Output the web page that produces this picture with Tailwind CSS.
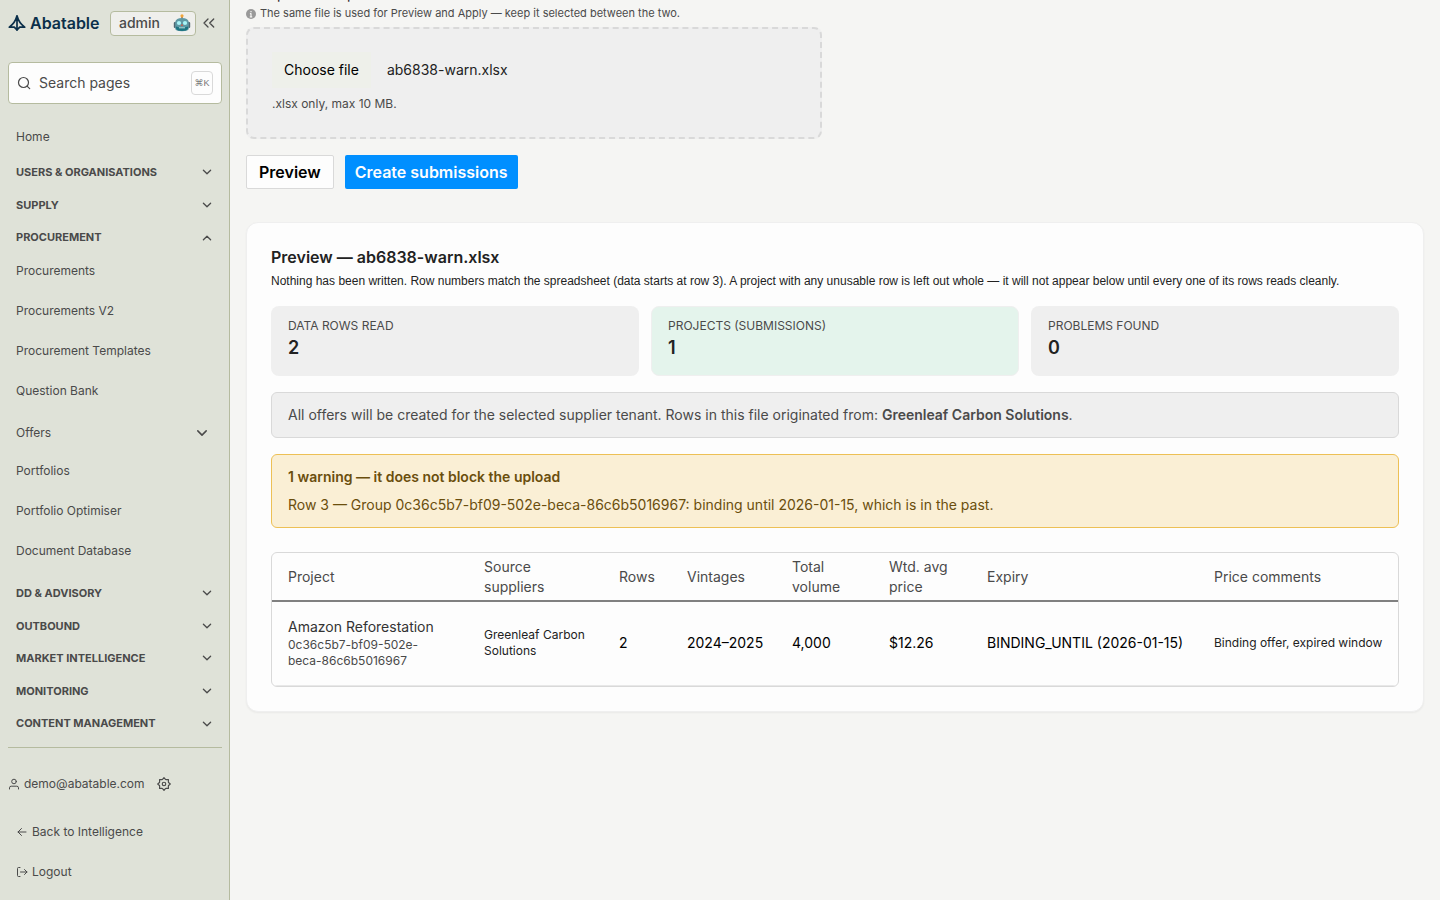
<!DOCTYPE html>
<html lang="en">
<head>
  <meta charset="UTF-8" />
  <meta name="viewport" content="width=device-width, initial-scale=1.0" />
  <title>Abatable admin - Upload submissions</title>
  <script src="https://cdn.jsdelivr.net/npm/@tailwindcss/browser@4"></script>
</head>
<body class="bg-[#f5f5f3] font-[Inter,'Liberation_Sans',Arial,sans-serif] text-[#222]">
  <!-- Shared icons -->
  <svg class="hidden" aria-hidden="true">
    <symbol id="chevron" viewBox="0 0 12 12" fill="none" stroke="currentColor" stroke-width="1.300" stroke-linecap="round" stroke-linejoin="round">
      <path d="M2.400 4.200 6 7.800l3.600-3.600" />
    </symbol>
  </svg>

  <div class="flex h-screen overflow-hidden">
    <!-- Sidebar -->
    <aside class="flex w-[230px] shrink-0 flex-col border-r border-[#b5bb9f] bg-[#dfe2d8] pr-[7px] pl-2 text-xs text-[#4a4a4a]">
      <div class="flex h-[46px] items-center">
        <a href="#" class="flex w-[90px] items-center gap-1 text-base font-semibold text-[#0b2f4a]">
          <svg class="h-[18px] w-[18px] shrink-0" viewBox="0 0 18 18" fill="none" stroke="currentColor" stroke-width="1.700" stroke-linejoin="round" stroke-linecap="round" aria-hidden="true">
            <path d="M9 1.800v14.400M9 1.800C7.800 6.500 5 10.500 1.300 13.200h5L9 16l2.700-2.800h5C13 10.500 10.200 6.500 9 1.800" />
          </svg>
          Abatable
        </a>
        <a href="#" class="ml-3 flex h-[25px] w-[86px] items-center justify-between rounded border border-[#b5bb9f] bg-[#efefec] px-2 text-sm font-medium">
          admin
          <svg class="-mr-1 h-[18px] w-[18px]" viewBox="0 0 18 18" aria-hidden="true">
            <path d="M9 2v3" stroke="#8b6a55" stroke-width="1.500" />
            <circle cx="9" cy="1.800" r="1.600" fill="#f0a53a" />
            <rect x="0.800" y="8" width="3" height="6" rx="1" fill="#4e6672" />
            <rect x="14.200" y="8" width="3" height="6" rx="1" fill="#4e6672" />
            <path d="M2.200 8Q3 4 9 4T15.800 8v6.500q0 2.800-6.800 2.800T2.200 14.500z" fill="#5f98a4" />
            <path d="M3 12.500q6 2 12 0v2q-1 2.500-6 2.500t-6-2.500z" fill="#1c7482" />
            <circle cx="6" cy="9" r="2.100" fill="#a9f3f7" /><circle cx="12" cy="9" r="2.100" fill="#a9f3f7" />
            <path d="M9 9.800l1.200 2H7.800z" fill="#e0503c" />
            <path d="M6 13.800h6" stroke="#b5dcdc" stroke-width="1" />
          </svg>
        </a>
        <button type="button" class="ml-[6px]" aria-label="Collapse sidebar">
          <svg class="h-[14px] w-[14px]" viewBox="0 0 14 14" fill="none" stroke="currentColor" stroke-width="1.300" stroke-linecap="round" stroke-linejoin="round" aria-hidden="true">
            <path d="M6 3 2 7l4 4M11.700 3l-4 4 4 4" />
          </svg>
        </button>
      </div>

      <label class="mt-4 flex h-[42px] shrink-0 items-center rounded border border-[#b5bb9f] bg-[#fdfdfd] px-2">
        <svg class="h-[14px] w-[14px] shrink-0" viewBox="0 0 14 14" fill="none" stroke="currentColor" stroke-width="1.200" stroke-linecap="round" aria-hidden="true">
          <circle cx="6.500" cy="6.500" r="5" /><path d="m10.300 10.300 2.400 2.400" />
        </svg>
        <input type="text" aria-label="Search pages" placeholder="Search pages" class="ml-2 w-full min-w-0 text-sm outline-none placeholder:text-[#4a4a4a]" />
        <kbd class="flex h-6 w-[22px] shrink-0 items-center justify-center rounded border border-[#d9d9d9] font-['Liberation_Sans','DejaVu_Sans',sans-serif] text-[9px] text-[#777]">⌘K</kbd>
      </label>

      <nav aria-label="Admin">
        <a href="#" class="mt-[13px] flex h-[39px] items-center px-2">Home</a>

        <div class="grid h-[98px] auto-rows-fr text-[11px] font-bold">
          <button type="button" class="flex items-center justify-between pr-[9px] pl-2">USERS &amp; ORGANISATIONS<svg class="h-3 w-3" aria-hidden="true"><use href="#chevron" /></svg></button>
          <button type="button" class="flex items-center justify-between pr-[9px] pl-2">SUPPLY<svg class="h-3 w-3" aria-hidden="true"><use href="#chevron" /></svg></button>
          <button type="button" class="flex items-center justify-between pr-[9px] pl-2" aria-expanded="true">PROCUREMENT<svg class="h-3 w-3 rotate-180" aria-hidden="true"><use href="#chevron" /></svg></button>
        </div>

        <div class="-mt-[3px] mb-[6px] flex flex-col">
          <a href="#" class="flex h-10 items-center px-2">Procurements</a>
          <a href="#" class="flex h-10 items-center px-2">Procurements V2</a>
          <a href="#" class="flex h-10 items-center px-2">Procurement Templates</a>
          <a href="#" class="flex h-10 items-center px-2">Question Bank</a>
          <button type="button" class="flex h-10 items-center justify-between pt-1 pr-[13px] pl-2">Offers<svg class="h-[14px] w-[14px]" aria-hidden="true"><use href="#chevron" /></svg></button>
          <a href="#" class="flex h-10 items-center px-2">Portfolios</a>
          <a href="#" class="flex h-10 items-center px-2">Portfolio Optimiser</a>
          <a href="#" class="flex h-10 items-center px-2">Document Database</a>
        </div>

        <div class="grid h-[163px] auto-rows-fr text-[11px] font-bold">
          <button type="button" class="flex items-center justify-between pr-[9px] pl-2">DD &amp; ADVISORY<svg class="h-3 w-3" aria-hidden="true"><use href="#chevron" /></svg></button>
          <button type="button" class="flex items-center justify-between pr-[9px] pl-2">OUTBOUND<svg class="h-3 w-3" aria-hidden="true"><use href="#chevron" /></svg></button>
          <button type="button" class="flex items-center justify-between pr-[9px] pl-2">MARKET INTELLIGENCE<svg class="h-3 w-3" aria-hidden="true"><use href="#chevron" /></svg></button>
          <button type="button" class="flex items-center justify-between pr-[9px] pl-2">MONITORING<svg class="h-3 w-3" aria-hidden="true"><use href="#chevron" /></svg></button>
          <button type="button" class="flex items-center justify-between pr-[9px] pl-2">CONTENT MANAGEMENT<svg class="h-3 w-3" aria-hidden="true"><use href="#chevron" /></svg></button>
        </div>
      </nav>

      <div class="mt-[7px] border-t border-[#b5bb9f] pt-4">
        <div class="flex h-10 items-center">
          <svg class="h-3 w-3" viewBox="0 0 12 12" fill="none" stroke="currentColor" stroke-width="1" stroke-linecap="round" aria-hidden="true">
            <circle cx="6" cy="3.500" r="2.300" /><path d="M1.500 11V9.800q0-1.600 1.700-1.600h5.600q1.700 0 1.700 1.600V11" />
          </svg>
          <span class="ml-1">demo@abatable.com</span>
          <button type="button" class="ml-3" aria-label="Settings">
            <svg class="h-[14px] w-[14px]" viewBox="0 0 24 24" fill="none" stroke="currentColor" stroke-width="2" stroke-linejoin="round" aria-hidden="true">
              <circle cx="12" cy="12" r="3" />
              <path d="M9.500 4.200 12 1.200l2.500 3q.5.500 1.200.3l3.900-.1-.1 3.900q-.2.700.3 1.200l3 2.500-3 2.500q-.5.500-.3 1.200l.1 3.900-3.900-.1q-.7-.2-1.200.3l-2.500 3-2.500-3q-.5-.5-1.200-.3l-3.900.1.100-3.900q.2-.7-.3-1.200l-3-2.500 3-2.500q.5-.5.300-1.200l-.1-3.900 3.900.1q.7.200 1.200-.3z" />
            </svg>
          </button>
        </div>
        <a href="#" class="mt-2 flex h-10 items-center gap-1 px-2">
          <svg class="h-3 w-3" viewBox="0 0 12 12" fill="none" stroke="currentColor" stroke-width="1" stroke-linecap="round" stroke-linejoin="round" aria-hidden="true"><path d="M10 6H2M5.500 2.500 2 6l3.500 3.500" /></svg>
          Back to Intelligence
        </a>
        <a href="#" class="flex h-10 items-center gap-1 px-2">
          <svg class="h-3 w-3" viewBox="0 0 12 12" fill="none" stroke="currentColor" stroke-width="1" stroke-linecap="round" stroke-linejoin="round" aria-hidden="true"><path d="M4 1.500H2.500q-1 0-1 1v7q0 1 1 1H4M4.500 6H11M8.500 3.500 11 6 8.500 8.500" /></svg>
          Logout
        </a>
      </div>
    </aside>

    <!-- Page content -->
    <main class="min-w-0 flex-1 overflow-hidden px-4">
      <div class="-mt-4 max-w-xl">
        <label for="file" class="block text-sm leading-5">Completed template</label>
        <p class="flex h-[23px] items-center gap-1 pb-1 text-[11px] text-[#4a4a4a]">
          <svg class="h-[10px] w-[10px]" viewBox="0 0 10 10" aria-hidden="true">
            <circle cx="5" cy="5" r="5" fill="#999" /><path d="M5 4.300V8M3.900 4.600H5M3.800 7.800h2.400M5 2v1.200" stroke="#f5f5f3" stroke-width="1.200" />
          </svg>
          The same file is used for Preview and Apply — keep it selected between the two.
        </p>
        <div class="h-28 rounded-lg border-2 border-dashed border-[#d9d9d9] bg-[#efefef] px-6 pt-[23px]">
          <div class="flex items-center gap-4 text-sm">
            <label for="file" class="flex h-9 cursor-pointer items-center bg-[#eef0ea] px-3 text-black">Choose file</label>
            <input id="file" type="file" accept=".xlsx" class="sr-only" />
            <span>ab6838-warn.xlsx</span>
          </div>
          <p class="mt-2 text-xs text-[#4a4a4a]">.xlsx only, max 10 MB.</p>
        </div>
      </div>

      <div class="mt-4 flex gap-[11px] text-base font-semibold">
        <button type="button" class="h-[34px] rounded-xs border border-[#d9d9d9] bg-[#fdfdfd] px-3 text-black">Preview</button>
        <button type="button" class="h-[34px] rounded-xs bg-[#008fff] px-[10px] text-[#fdfdfd]">Create submissions</button>
      </div>

      <section class="mt-[33px] rounded-xl border border-[#efefef] bg-[#fdfdfd] p-6 shadow-xs">
        <h2 class="text-base leading-5 font-semibold">Preview — ab6838-warn.xlsx</h2>
        <p class="mt-1 font-['Liberation_Sans',Arial,sans-serif] text-xs leading-5">Nothing has been written. Row numbers match the spreadsheet (data starts at row 3). A project with any unusable row is left out whole — it will not appear below until every one of its rows reads cleanly.</p>

        <dl class="mt-[15px] grid grid-cols-3 gap-3">
          <div class="h-[70px] rounded-lg bg-[#efefef] px-[17px] pt-3">
            <dt class="text-xs text-[#4a4a4a]">DATA ROWS READ</dt>
            <dd class="text-lg leading-7 font-semibold">2</dd>
          </div>
          <div class="h-[70px] rounded-lg border border-[#efefef] bg-[#e4f4ec] px-4 pt-[11px]">
            <dt class="text-xs text-[#4a4a4a]">PROJECTS (SUBMISSIONS)</dt>
            <dd class="text-lg leading-7 font-semibold">1</dd>
          </div>
          <div class="h-[70px] rounded-lg bg-[#efefef] px-[17px] pt-3">
            <dt class="text-xs text-[#4a4a4a]">PROBLEMS FOUND</dt>
            <dd class="text-lg leading-7 font-semibold">0</dd>
          </div>
        </dl>

        <p class="mt-4 rounded-md border border-[#d9d9d9] bg-[#efefef] px-4 py-3 text-sm text-[#4a4a4a]">All offers will be created for the selected supplier tenant. Rows in this file originated from: <strong class="font-semibold">Greenleaf Carbon Solutions</strong>.</p>

        <div class="mt-4 rounded-md border border-[#edc055] bg-[#faefd5] px-4 py-3 text-sm text-[#6a4e0d]">
          <p class="font-semibold">1 warning — it does not block the upload</p>
          <p class="mt-2">Row 3 — Group 0c36c5b7-bf09-502e-beca-86c6b5016967: binding until 2026-01-15, which is in the past.</p>
        </div>

        <div class="mt-6 overflow-hidden rounded-md border border-[#d9d9d9]">
          <table class="w-full table-fixed border-collapse text-left text-sm">
            <colgroup>
              <col class="w-[196px]" /><col class="w-[135px]" /><col class="w-[68px]" /><col class="w-[105px]" />
              <col class="w-[97px]" /><col class="w-[98px]" /><col class="w-[227px]" /><col class="w-[200px]" />
            </colgroup>
            <thead>
              <tr class="h-12 border-b-2 border-[#808080] text-[#4a4a4a]">
                <th class="px-4 font-normal">Project</th>
                <th class="px-4 font-normal">Source suppliers</th>
                <th class="px-4 font-normal">Rows</th>
                <th class="px-4 font-normal">Vintages</th>
                <th class="px-4 font-normal">Total volume</th>
                <th class="px-4 font-normal">Wtd. avg price</th>
                <th class="px-4 font-normal">Expiry</th>
                <th class="px-4 font-normal">Price comments</th>
              </tr>
            </thead>
            <tbody>
              <tr class="h-[84px] border-b border-[#e8e8e8] text-black">
                <td class="pr-8 pl-4 text-[#333]">
                  <div class="whitespace-nowrap">Amazon Reforestation</div>
                  <div class="text-xs text-[#4a4a4a]">0c36c5b7-bf09-502e-beca-86c6b5016967</div>
                </td>
                <td class="px-4 text-xs text-[#222]">Greenleaf Carbon Solutions</td>
                <td class="px-4">2</td>
                <td class="px-4 whitespace-nowrap">2024–2025</td>
                <td class="px-4">4,000</td>
                <td class="px-4">$12.26</td>
                <td class="px-4 whitespace-nowrap">BINDING_UNTIL (2026-01-15)</td>
                <td class="px-4 text-xs whitespace-nowrap text-[#222]">Binding offer, expired window</td>
              </tr>
            </tbody>
          </table>
        </div>
      </section>
    </main>
  </div>
</body>
</html>
